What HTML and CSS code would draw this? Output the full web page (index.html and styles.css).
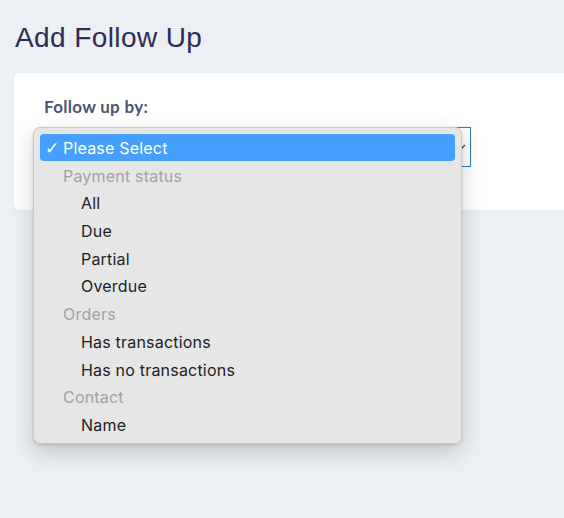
FILE: index.html
```html
<!DOCTYPE html>
<html>
<head>
<meta charset="utf-8">
<link rel="stylesheet" href="styles.css">
</head>
<body>
  <h1 class="title">Add Follow Up</h1>
  <section class="card">
    <div class="field-label">Follow up by:</div>
    <div class="select-wrap">
      <div class="select">
        <svg class="arrow" width="12" height="8" viewBox="0 0 12 8"><path d="M2 2 L6 6 L10 2" fill="none" stroke="#444" stroke-width="1.3"/></svg>
      </div>
      <ul class="menu">
        <li class="opt selected"><span class="check">✓</span>Please Select</li>
        <li class="group">Payment status</li>
        <li class="opt">All</li>
        <li class="opt">Due</li>
        <li class="opt">Partial</li>
        <li class="opt">Overdue</li>
        <li class="group">Orders</li>
        <li class="opt">Has transactions</li>
        <li class="opt">Has no transactions</li>
        <li class="group">Contact</li>
        <li class="opt">Name</li>
      </ul>
    </div>
  </section>
</body>
</html>
```
FILE: styles.css
```css
html, body {
  margin: 0;
  padding: 0;
}
body {
  background: #eceff4;
  width: 564px;
  height: 518px;
  overflow: hidden;
}
.title {
  margin: 0;
  padding: 22px 0 0 15px;
  height: 73px;
  box-sizing: border-box;
  font-family: "Liberation Sans", Arial, sans-serif;
  font-weight: 400;
  font-size: 28px;
  letter-spacing: 0.4px;
  line-height: 32px;
  color: #2e2c57;
}
.card {
  margin-left: 14px;
  background: #fff;
  border-radius: 6px 0 0 6px;
  height: 137px;
  box-sizing: border-box;
  padding: 24px 0 0 30px;
  box-shadow: 0 1px 3px rgba(0,0,0,0.04);
}
.field-label {
  font-family: Lato, "Open Sans", sans-serif;
  font-weight: 700;
  font-size: 17px;
  letter-spacing: 0.3px;
  line-height: 20px;
  color: #4a5478;
  height: 30px;
}
.select-wrap {
  position: relative;
  width: 427px;
}
.select {
  height: 40px;
  box-sizing: border-box;
  border: 1px solid #2f7dbd;
  background: #fff;
  position: relative;
}
.arrow {
  position: absolute;
  right: 3px;
  top: 15px;
}
.menu {
  position: absolute;
  left: -11px;
  top: 0;
  width: 429px;
  height: 317px;
  box-sizing: border-box;
  margin: 0;
  padding: 6px 6px;
  list-style: none;
  background: #e6e6e6;
  border: 1px solid #c9c9c9;
  border-radius: 7px;
  box-shadow: 0 8px 22px rgba(0,0,0,0.18), 0 1px 3px rgba(0,0,0,0.12);
  font-family: Inter, "Liberation Sans", sans-serif;
  font-size: 16px;
  letter-spacing: 0.2px;
}
.menu li {
  height: 27.7px;
  line-height: 29px;
  white-space: nowrap;
}
.opt {
  padding-left: 41px;
  color: #222;
}
.group {
  padding-left: 23px;
  color: #a3a3a3;
}
.opt.selected {
  background: #459ffe;
  color: #fff;
  border-radius: 4px;
  padding-left: 5px;
  height: 27px;
  line-height: 28.5px;
  margin-bottom: 0.7px;
}
.check {
  display: inline-block;
  width: 18px;
  font-size: 17px;
  font-family: "DejaVu Sans", sans-serif;
  letter-spacing: 0;
}
```
